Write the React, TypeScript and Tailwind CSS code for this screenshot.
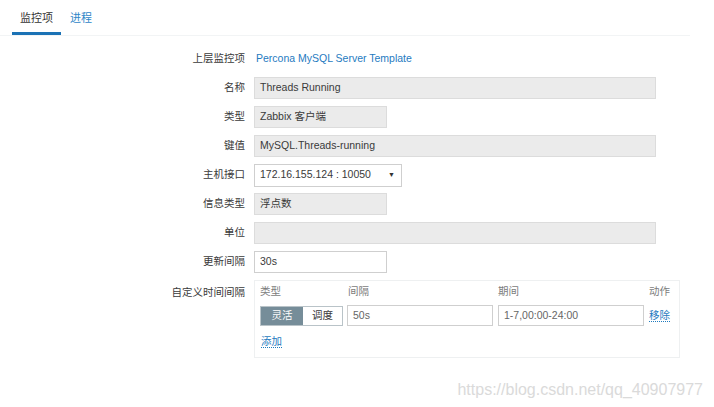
import React from "react";

const font = { fontFamily: '"Liberation Sans", Arial, "Noto Sans CJK SC", sans-serif' };

function Row({ label, children }: { label: string; children: React.ReactNode }) {
  return (
    <div className="flex h-[22px] items-center">
      <div className="w-[245px] shrink-0 text-right text-[#3a3a3a]">{label}</div>
      <div className="ml-[9px] flex h-full items-center">{children}</div>
    </div>
  );
}

function Field({ value, wide, white }: { value: string; wide?: boolean; white?: boolean }) {
  return (
    <div
      className={
        "flex h-[22px] items-center border px-[5px] text-[#3a3a3a] " +
        (wide ? "w-[402px] " : "w-[133px] ") +
        (white ? "border-[#cfcfcf] bg-white" : "border-[#dcdcdc] bg-[#ebebeb]")
      }
    >
      {value}
    </div>
  );
}

export default function App() {
  return (
    <div className="h-[407px] w-[714px] bg-white text-[10.5px]" style={font}>
      <div className="mr-[24px] flex h-[36px] items-end border-b border-[#f2f4f5] pl-[12px]">
        <div className="flex h-[36px] items-center border-b-[3px] border-[#1b72b5] px-[8px] pt-[6px] text-[11px] text-[#333]">
          监控项
        </div>
        <div className="flex h-[36px] items-center px-[9px] pt-[3px] text-[11px] text-[#2e86c8]">进程</div>
      </div>

      <div className="mt-[12px] flex flex-col gap-[7px]">
        <Row label="上层监控项">
          <span className="pl-[2px] text-[#1f7bbf]">Percona MySQL Server Template</span>
        </Row>
        <Row label="名称">
          <Field value="Threads Running" wide />
        </Row>
        <Row label="类型">
          <Field value="Zabbix 客户端" />
        </Row>
        <Row label="键值">
          <Field value="MySQL.Threads-running" wide />
        </Row>
        <Row label="主机接口">
          <div className="flex h-[23px] w-[148px] items-center justify-between border border-[#cfcfcf] bg-white pl-[5px] pr-[6px] text-[#3a3a3a]">
            <span>172.16.155.124 : 10050</span>
            <span className="text-[7px] text-[#333]">▼</span>
          </div>
        </Row>
        <Row label="信息类型">
          <Field value="浮点数" />
        </Row>
        <Row label="单位">
          <Field value="" wide />
        </Row>
        <Row label="更新间隔">
          <Field value="30s" white />
        </Row>

        <div className="flex">
          <div className="w-[245px] shrink-0 pt-[5px] text-right text-[#3a3a3a]">自定义时间间隔</div>
          <div className="ml-[9px] h-[78px] w-[426px] border border-[#eef0f1] pl-[5px] pr-[8px] pt-[4px]">
            <div className="flex h-[14px] items-center text-[#7c7c7c]">
              <span className="w-[88px]">类型</span>
              <span className="w-[150px]">间隔</span>
              <span className="w-[151px]">期间</span>
              <span>动作</span>
            </div>
            <div className="mt-[6px] flex h-[21px] items-center">
              <div className="flex h-[20px] w-[83px] border border-[#b9c3c8]">
                <div className="flex w-[42px] items-center justify-center bg-[#768d99] text-white">灵活</div>
                <div className="flex flex-1 items-center justify-center bg-white text-[#3a3a3a]">调度</div>
              </div>
              <div className="ml-[4px] flex h-[21px] w-[146px] items-center border border-[#cfcfcf] px-[5px] text-[#666]">
                50s
              </div>
              <div className="ml-[5px] flex h-[21px] w-[146px] items-center border border-[#cfcfcf] px-[5px] text-[#666]">
                1-7,00:00-24:00
              </div>
              <span className="ml-[5px] border-b border-dotted border-[#1f7bbf] leading-[12px] text-[#1f7bbf]">移除</span>
            </div>
            <div className="mt-[9px] flex">
              <span className="ml-[1px] border-b border-dotted border-[#1f7bbf] leading-[12px] text-[#1f7bbf]">添加</span>
            </div>
          </div>
        </div>
      </div>

      <div className="mt-[20px] flex justify-end pr-[11px]">
        <span className="text-[16px] text-[#dadada]">https://blog.csdn.net/qq_40907977</span>
      </div>
    </div>
  );
}
